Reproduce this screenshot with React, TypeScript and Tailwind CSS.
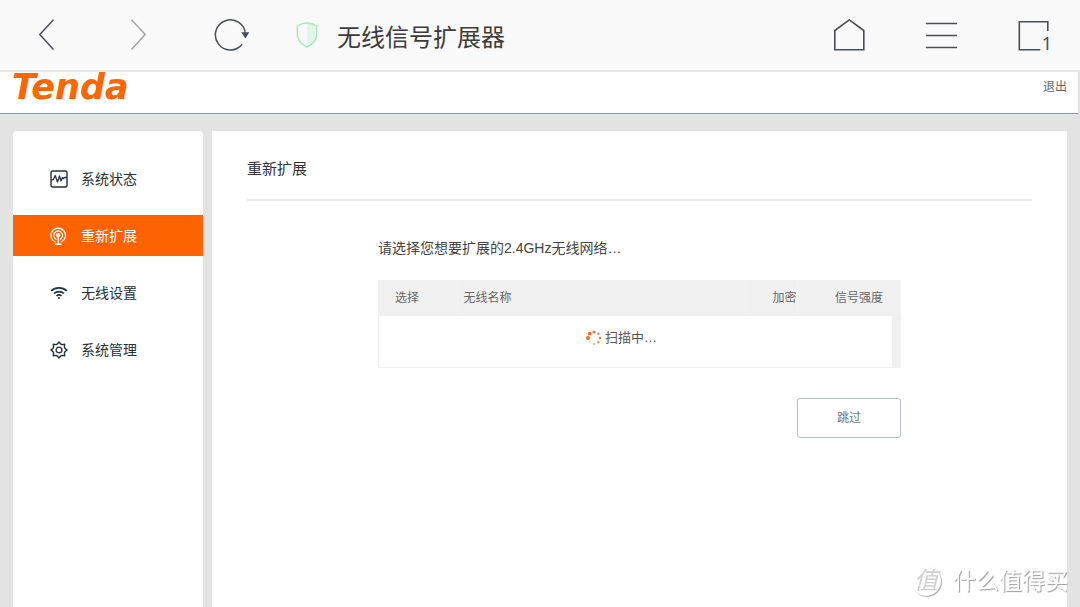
import { useState } from 'react';
import type { ReactNode } from 'react';
import clsx from 'clsx';

const StatusIcon = () => (
  <svg className="size-[18px]" viewBox="0 0 18 18" fill="none" stroke="currentColor" strokeWidth="1.4" strokeLinejoin="round">
    <rect x="1" y="1" width="16" height="16" rx="1.8" />
    <path d="M1.5 9.800h1.700l2-4.300 2.300 6.500 2-6 1.500 5 1.500-3.500 1 1 1-1h2.500" strokeWidth="1.300" />
  </svg>
);

const AntennaIcon = () => (
  <svg className="size-[18px]" viewBox="0 0 18 18" fill="none" stroke="currentColor" strokeWidth="1.3" strokeLinecap="round">
    <path d="M5.2 15a7.300 7.300 0 1 1 6 0" />
    <path d="M6 12.200a4.400 4.400 0 1 1 4.400 0" />
    <circle cx="8.2" cy="8.2" r="1.500" fill="currentColor" />
    <path d="M8.200 9v8M5.400 17.200h5.600" strokeWidth="1.500" />
  </svg>
);

const WifiIcon = () => (
  <svg className="size-[18px]" viewBox="0 0 18 18" fill="none" stroke="currentColor" strokeWidth="1.7">
    <path d="M1.200 6.800c4.200-4 11.400-4 15.600 0" />
    <path d="M4 9.500c2.800-2.600 7.200-2.600 10 0" />
    <path d="M6.500 12c1.400-1.300 3.600-1.300 5 0" />
    <circle cx="9" cy="13.900" r="1" fill="currentColor" stroke="none" />
  </svg>
);

const GearIcon = () => (
  <svg className="size-[18px]" viewBox="0 0 18 18" fill="none" stroke="currentColor" strokeWidth="1.400" strokeLinejoin="round">
    <path d="M9 .9l1.600 2.100 1.500.6 2.600-.3-.3 2.600.6 1.500L17.100 9 15 10.600l-.6 1.500.3 2.600-2.600-.3-1.500.6L9 17.100 7.400 15l-1.500-.6-2.600.3.3-2.600-.6-1.500L.9 9 3 7.400l.6-1.500-.3-2.600 2.600.3L7.400 3z" />
    <circle cx="9" cy="9" r="2.900" />
  </svg>
);

const spinnerDots = [
  { cx: 8, cy: 2, r: 1.6, o: 0.9 },
  { cx: 12.3, cy: 3.7, r: 1.3, o: 0.8 },
  { cx: 14, cy: 8, r: 1.2, o: 0.9 },
  { cx: 12.3, cy: 12.3, r: 1.2, o: 0.7 },
  { cx: 8, cy: 14, r: 1.1, o: 0.6 },
  { cx: 3.7, cy: 12.3, r: 1, o: 0.4 },
  { cx: 2, cy: 8, r: 2, o: 1 },
  { cx: 3.7, cy: 3.7, r: 1.9, o: 1 },
];

const Spinner = () => (
  <svg className="size-4" viewBox="0 0 16 16" fill="#f56a14">
    {spinnerDots.map((dot, index) => (
      <circle key={index} cx={dot.cx} cy={dot.cy} r={dot.r} opacity={dot.o} />
    ))}
  </svg>
);

const ToolButton = ({ label, children }: { label: string; children: ReactNode }) => (
  <button type="button" aria-label={label} className="flex h-full w-[92px] items-center justify-center text-[#4b4e55]">
    {children}
  </button>
);

const BrowserBar = () => (
  <div className="flex h-[72px] items-center justify-between border-b-2 border-[#e8e8e8] bg-[#f9f9f9]">
    <div className="flex h-full items-center">
      <ToolButton label="后退">
        <svg className="h-8 w-4" viewBox="0 0 16 32" fill="none" stroke="currentColor" strokeWidth="1.5">
          <path d="M15.500.8L1.800 15.500l13.700 15" />
        </svg>
      </ToolButton>
      <ToolButton label="前进">
        <svg className="h-8 w-4" viewBox="0 0 16 32" fill="none" stroke="#a3a4a6" strokeWidth="1.500">
          <path d="M1.500.8l13.700 14.700-13.700 15" />
        </svg>
      </ToolButton>
      <ToolButton label="刷新">
        <svg className="h-8 w-10" viewBox="-4 0 40 32" fill="none" stroke="currentColor" strokeWidth="1.500">
          <path d="M31.400 15.200A15 15 0 1 0 28.200 25.200" />
          <path d="M27.200 13.200h8.200l-4 6.400z" fill="currentColor" stroke="none" />
        </svg>
      </ToolButton>
      <svg className="ml-5 h-[26px] w-[22px]" viewBox="0 0 22 26" fill="none">
        <path d="M11 1.300c3.500 0 6.500.9 9.500 2.700v8.500c0 5-4 9.500-9.500 12.500z" fill="#e2f5e8" />
        <path d="M11 1.100C7.500 1.100 4.300 2 1.300 4v8.400c0 5.100 4 9.600 9.700 12.600 5.700-3 9.700-7.500 9.700-12.600V4c-3-2-6.200-2.900-9.700-2.900z" stroke="#a5edbd" strokeWidth="1.500" />
      </svg>
      <span className="ml-[19px] pt-1.5 text-2xl text-[#3c3c3c]">无线信号扩展器</span>
    </div>
    <div className="flex h-full items-center">
      <ToolButton label="主页">
        <svg className="h-8 w-8" viewBox="0 0 32 32" fill="none" stroke="currentColor" strokeWidth="1.600">
          <path d="M.8 11.500L15.300.9l14.500 10.600v19.200H.8z" />
        </svg>
      </ToolButton>
      <ToolButton label="菜单">
        <svg className="h-8 w-8" viewBox="0 0 32 32" fill="none" stroke="currentColor" strokeWidth="1.600">
          <path d="M0 4.500h31M0 16.500h31M0 28.500h31" />
        </svg>
      </ToolButton>
      <ToolButton label="标签页">
        <span className="relative">
          <svg className="h-8 w-8" viewBox="0 0 32 32" fill="none" stroke="currentColor" strokeWidth="1.600">
            <path d="M29.800 12V2.800H1.300v28h21" />
          </svg>
          <span className="absolute -right-0.5 -bottom-0.5 font-['Noto_Sans','Noto_Sans_CJK_SC',sans-serif] text-lg leading-5">1</span>
        </span>
      </ToolButton>
    </div>
  </div>
);

const menu = [
  { name: '系统状态', icon: StatusIcon },
  { name: '重新扩展', icon: AntennaIcon },
  { name: '无线设置', icon: WifiIcon },
  { name: '系统管理', icon: GearIcon },
];

const Sidebar = () => {
  const [active, setActive] = useState('重新扩展');

  return (
    <nav className="flex w-[190px] shrink-0 flex-col gap-4 rounded-t-sm bg-white pt-[27px] text-sm">
      {menu.map(({ name, icon: Icon }) => (
        <a
          key={name}
          href="#"
          onClick={() => setActive(name)}
          className={clsx(
            'flex h-[41px] items-center gap-[13px] pl-[37px]',
            active === name ? 'bg-[#ff6200] text-white' : 'text-[#263038]'
          )}
        >
          <Icon />
          {name}
        </a>
      ))}
    </nav>
  );
};

const NetworkTable = () => (
  <table className="w-full table-fixed border-collapse text-left">
    <thead className="bg-[#f0f0f0] text-xs text-[#666]">
      <tr className="h-[35px]">
        <th className="w-[79px] border-r border-[#f3f3f3] pl-[17px] font-normal">选择</th>
        <th className="border-r border-[#f3f3f3] pl-[6px] font-normal">无线名称</th>
        <th className="w-[52px] border-r border-[#f3f3f3] text-right font-normal">加密</th>
        <th className="w-[104px] pr-[18px] text-right font-normal">信号强度</th>
      </tr>
    </thead>
    <tbody className="text-[13px] text-[#555]">
      <tr>
        <td colSpan={4} className="p-0">
          <div className="flex h-[53px] justify-center border border-r-[9px] border-[#efefef] pt-3 pr-7">
            <span className="flex h-5 items-center gap-[3px]">
              <Spinner />
              扫描中…
            </span>
          </div>
        </td>
      </tr>
    </tbody>
  </table>
);

export default function App() {
  return (
    <div className="flex min-h-screen flex-col bg-[#e3e3e3] font-['Liberation_Sans','Noto_Sans_CJK_SC',sans-serif]">
      <BrowserBar />
      <header className="mr-0.5 flex h-[42px] items-start justify-between border-b border-[#ff7a38] bg-white pr-[11px] pl-3">
        <a href="#" className="font-['DejaVu_Sans',sans-serif] text-[35px] leading-[30px] font-bold text-[#ff6600] italic">
          Tenda
        </a>
        <a href="#" className="pt-[5px] text-xs leading-5 text-[#666]">退出</a>
      </header>

      <div className="flex grow gap-[9px] pt-[17px] pr-[13px] pl-[13px]">
        <Sidebar />
        <main className="grow bg-white px-[35px] pt-[26px]">
          <h1 className="border-b-2 border-[#ededed] pb-[18px] text-[15px] leading-6 text-[#333]">重新扩展</h1>
          <section className="mx-auto max-w-[523px] pt-[35px]">
            <p className="pb-5 text-sm leading-6 text-[#444]">请选择您想要扩展的2.4GHz无线网络…</p>
            <NetworkTable />
            <div className="flex justify-end pt-[30px]">
              <button type="button" className="h-10 w-[104px] rounded-[3px] border border-[#b4bfca] bg-white text-xs text-[#6b747c]">
                跳过
              </button>
            </div>
          </section>
        </main>
      </div>

      <div className="pointer-events-none fixed right-3 bottom-2 flex items-center gap-3 text-white [text-shadow:1px_1px_1px_#999]">
        <span className="flex size-[30px] items-center justify-center rounded-full text-2xl text-[#d0d0d0] italic shadow-[1px_1px_1px_#aaa] [text-shadow:none]">值</span>
        <span className="text-[23px] leading-9">什么值得买</span>
      </div>
    </div>
  );
}
